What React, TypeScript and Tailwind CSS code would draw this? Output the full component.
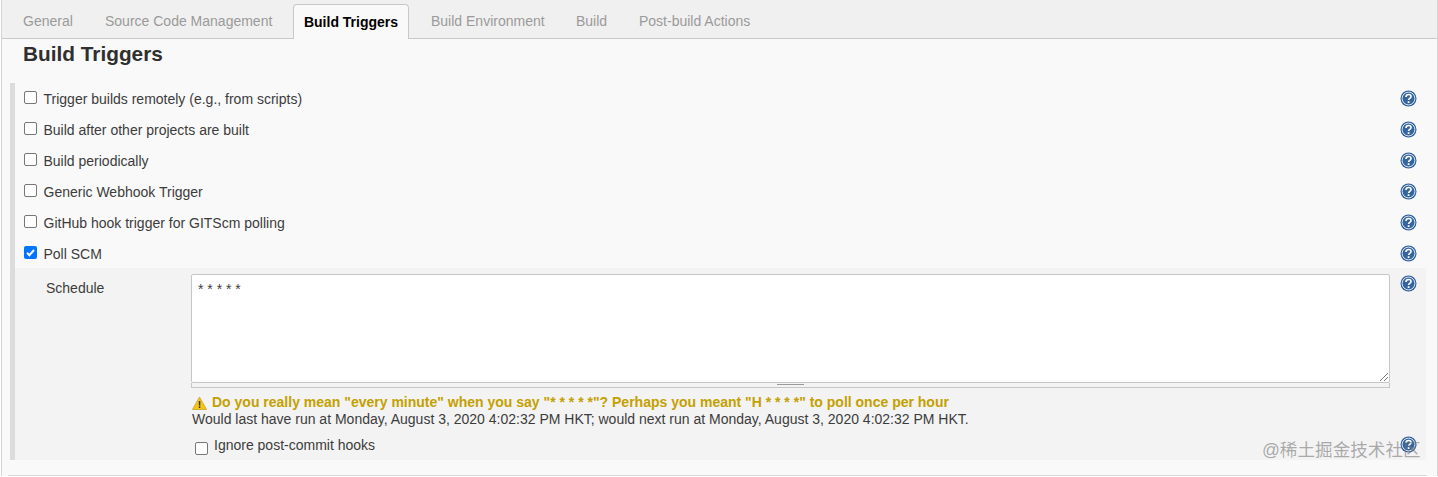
import React from "react";

function Help() {
  return (
    <svg width="17" height="17" viewBox="0 0 17 17" className="block shrink-0">
      <circle cx="8.5" cy="8.5" r="8" fill="#2f5f9e" />
      <circle cx="8.5" cy="8.5" r="6.4" fill="#34659f" stroke="#dde6f1" strokeWidth="1" />
      <path d="M6 6.9c0-1.6 1.1-2.4 2.6-2.4s2.5.9 2.5 2.1c0 1.9-2.5 1.8-2.5 3.5" fill="none" stroke="#fff" strokeWidth="1.6" />
      <rect x="7.7" y="11.2" width="1.8" height="1.8" fill="#fff" />
    </svg>
  );
}

function Check({ checked = false }: { checked?: boolean }) {
  return checked ? (
    <span className="w-[13px] h-[13px] rounded-[2px] bg-[#0075ff] flex items-center justify-center shrink-0">
      <svg width="11" height="11" viewBox="0 0 11 11">
        <path d="M2 5.8 4.4 8.2 9 3" fill="none" stroke="#fff" strokeWidth="2" />
      </svg>
    </span>
  ) : (
    <span className="block w-[13px] h-[13px] rounded-[2px] border border-[#767676] bg-white shrink-0" />
  );
}

const rows = [
  "Trigger builds remotely (e.g., from scripts)",
  "Build after other projects are built",
  "Build periodically",
  "Generic Webhook Trigger",
  "GitHub hook trigger for GITScm polling",
];

function Row({ label, checked }: { label: string; checked?: boolean }) {
  return (
    <div className="h-[31px] flex items-center pl-[9px] pr-[9px]">
      <span className="-mt-[2px]">
        <Check checked={checked} />
      </span>
      <span className="ml-[6.5px] grow">{label}</span>
      <span className="-mt-[1px]">
        <Help />
      </span>
    </div>
  );
}

export default function App() {
  return (
    <div className="w-[1438px] h-[477px] overflow-hidden relative bg-white text-[14px] leading-[16px] text-[#3c3c3c] font-['Liberation_Sans',Arial,sans-serif]">
      <div className="ml-[1px] w-[1437px] h-[476px] border-x border-[#d5d5d5] bg-[#f9f9f9] flex flex-col">
        <div className="h-[39px] shrink-0 bg-[#f0f0f0] border-b border-[#c8c8c8] flex items-end pl-[21px] text-[#9a9a9a]">
          <span className="h-[34px] flex items-center w-[82px]">General</span>
          <span className="h-[34px] flex items-center w-[188px]">Source Code Management</span>
          <span className="h-[35px] -mb-[1px] w-[116px] flex items-center justify-center bg-[#f9f9f9] border border-b-0 border-[#c8c8c8] rounded-t-[4px] font-bold text-black">
            Build Triggers
          </span>
          <span className="h-[34px] flex items-center w-[145px] ml-[22px]">Build Environment</span>
          <span className="h-[34px] flex items-center w-[63px]">Build</span>
          <span className="h-[34px] flex items-center">Post-build Actions</span>
        </div>
        <h2 className="pl-[21px] mt-[2px] h-[29px] leading-[26px] text-[20.8px] font-bold text-[#2f2f2f]">Build Triggers</h2>
        <div className="ml-[8px] mr-[11px] mt-[13px] border-l-[5px] border-[#dcdcdc] h-[377px] flex flex-col shrink-0">
          {rows.map((r) => (
            <Row key={r} label={r} />
          ))}
          <Row label="Poll SCM" checked />
          <div className="mt-[-1px] h-[192px] bg-[#f3f3f3] flex pr-[9px]">
            <div className="w-[176px] pl-[31px] pt-[12px] shrink-0">Schedule</div>
            <div className="grow pt-[6px] min-w-0">
              <div className="h-[109px] bg-white border border-[#c6c6c6] rounded-[2px] pl-[6px] pt-[6px] relative text-[14px]">
                * * * * *
                <svg width="11" height="11" viewBox="0 0 11 11" className="absolute right-0 bottom-0">
                  <path d="M2 10 10 2M6 10 10 6" stroke="#777" strokeWidth="1" fill="none" />
                </svg>
              </div>
              <div className="h-[5px] bg-[#f3f3f3] border border-t-0 border-[#c6c6c6] flex justify-center">
                <span className="w-[27px] h-[3px] -mt-[1px] border-y border-[#999]" />
              </div>
              <div className="mt-[5px] pl-[1px] flex items-center h-[17px] font-bold text-[#c4a000]">
                <svg width="15" height="14" viewBox="0 0 15 14" className="mr-[5px] mt-[2px] shrink-0">
                  <path d="M7.5 1 14.5 13.5H.5Z" fill="#f5c518" stroke="#c9a227" strokeWidth="0.8" />
                  <rect x="6.8" y="5" width="1.5" height="4.6" fill="#333" />
                  <rect x="6.8" y="10.4" width="1.5" height="1.6" fill="#333" />
                </svg>
                {'Do you really mean "every minute" when you say "* * * * *"? Perhaps you meant "H * * * *" to poll once per hour'}
              </div>
              <div className="mt-[1px] pl-[1px] h-[17px] leading-[17px]">
                Would last have run at Monday, August 3, 2020 4:02:32 PM HKT; would next run at Monday, August 3, 2020 4:02:32 PM HKT.
              </div>
              <div className="mt-[9px] flex items-start pl-[4px] h-[20px]">
                <span className="mt-[5px]">
                  <Check />
                </span>
                <span className="ml-[6px]">Ignore post-commit hooks</span>
              </div>
            </div>
            <div className="w-[27px] pl-[10px] pt-[7px] shrink-0 relative">
              <Help />
              <span className="absolute left-[10px] top-[168px]">
                <Help />
              </span>
            </div>
          </div>
        </div>
        <div className="ml-[6px] mr-[10px] mt-[15px] border-t border-[#d8d8d8]" />
      </div>
      <div className="absolute left-[1262px] top-[439px] text-[17.6px] leading-[22px] whitespace-nowrap text-[#77777799] font-['Liberation_Sans','Noto_Sans_CJK_SC',sans-serif]">
        @稀土掘金技术社区
      </div>
    </div>
  );
}
